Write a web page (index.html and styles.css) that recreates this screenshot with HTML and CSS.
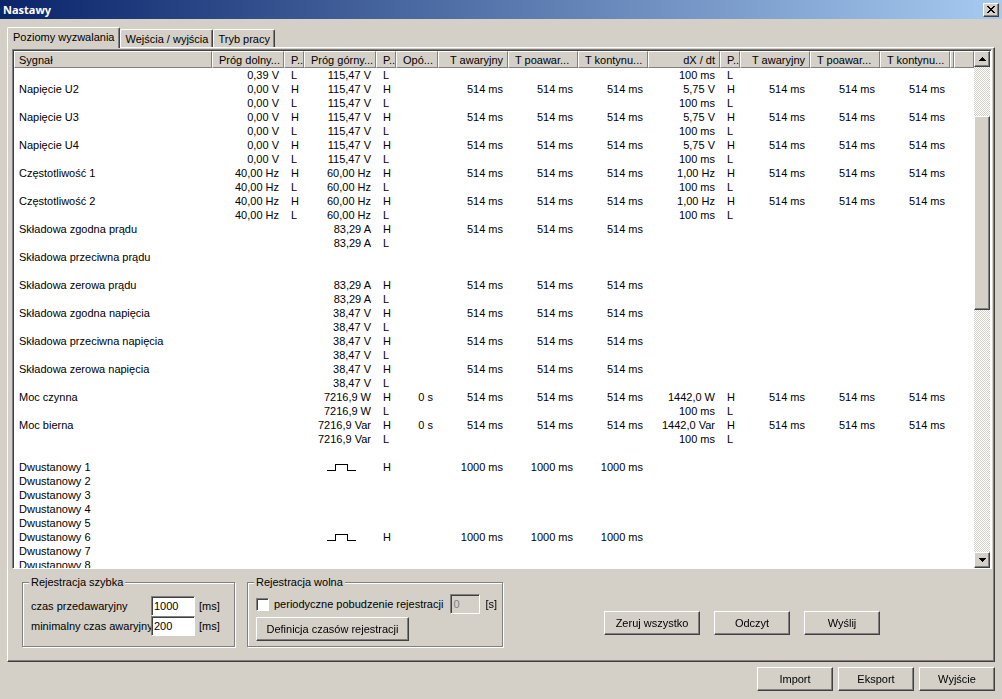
FILE: index.html
```html
<!DOCTYPE html>
<html lang="pl">
<head>
<meta charset="utf-8">
<title>Nastawy</title>
<link rel="stylesheet" href="styles.css">
</head>
<body>
<div class="window">
  <header class="titlebar">
    <h1 class="title">Nastawy</h1>
    <button class="btn close" type="button" aria-label="Zamknij">
      <svg width="8" height="7" viewBox="0 0 8 7" shape-rendering="crispEdges"><path d="M0 0h2v1h1v1h2V1h1V0h2v1H7v1H6v1H5v1h1v1h1v1h1v1H6V6H5V5H3v1H2v1H0V6h1V5h1V4h1V3H2V2H1V1H0z"/></svg>
    </button>
  </header>

  <main class="body">
    <div class="tabs" role="tablist">
      <button class="tab active" type="button" role="tab" aria-selected="true">Poziomy wyzwalania</button>
      <button class="tab" type="button" role="tab" aria-selected="false">Wejścia / wyjścia</button>
      <button class="tab" type="button" role="tab" aria-selected="false">Tryb pracy</button>
    </div>

    <section class="panel" role="tabpanel">
      <div class="listview">
        <div class="list">
          <table class="grid">
            <colgroup>
              <col class="w-name"><col class="w-level"><col class="w-flag"><col class="w-level"><col class="w-flag"><col class="w-delay">
              <col class="w-time"><col class="w-time"><col class="w-time"><col class="w-level"><col class="w-flag">
              <col class="w-time"><col class="w-time"><col class="w-time"><col class="w-stub"><col>
            </colgroup>
            <thead>
              <tr>
                <th class="left">Sygnał</th><th class="cut">Próg dolny...</th><th class="cut">P..</th><th class="cut">Próg górny...</th><th class="cut">P..</th><th class="cut">Opó...</th>
                <th>T awaryjny</th><th class="cut">T poawar...</th><th class="cut">T kontynu...</th><th>dX / dt</th><th class="cut">P..</th>
                <th>T awaryjny</th><th class="cut">T poawar...</th><th class="cut">T kontynu...</th><th class="stub"></th><th></th>
              </tr>
            </thead>
            <tbody id="rows"></tbody>
          </table>
        </div>
        <div class="scrollbar">
          <button class="btn arrow" type="button" aria-label="W górę"><svg width="7" height="4" viewBox="0 0 7 4" shape-rendering="crispEdges"><path d="M3 0h1v1h1v1h1v1h1v1H0V3h1V2h1V1h1z"/></svg></button>
          <div class="track"><div class="before"></div><div class="thumb"></div><div class="after"></div></div>
          <button class="btn arrow" type="button" aria-label="W dół"><svg width="7" height="4" viewBox="0 0 7 4" shape-rendering="crispEdges"><path d="M0 0h7v1H6v1H5v1H4v1H3V3H2V2H1V1H0z"/></svg></button>
        </div>
      </div>

      <div class="controls">
        <fieldset class="group fast">
          <legend>Rejestracja szybka</legend>
          <label for="pre">czas przedawaryjny</label><input class="field" id="pre" type="text" value="1000"><span>[ms]</span>
          <label for="min">minimalny czas awaryjny</label><input class="field" id="min" type="text" value="200"><span>[ms]</span>
        </fieldset>
        <fieldset class="group slow">
          <legend>Rejestracja wolna</legend>
          <div class="line">
            <input class="check" type="checkbox" id="periodic"><label class="grow" for="periodic">periodyczne pobudzenie rejestracji</label>
            <input class="field small" type="text" value="0" aria-label="okres [s]" disabled><span>[s]</span>
          </div>
          <button class="btn push wide" type="button">Definicja czasów rejestracji</button>
        </fieldset>
        <div class="actions">
          <button class="btn push zero" type="button">Zeruj wszystko</button>
          <button class="btn push" type="button">Odczyt</button>
          <button class="btn push" type="button">Wyślij</button>
        </div>
      </div>
    </section>
  </main>

  <footer class="footer">
    <button class="btn push" type="button">Import</button>
    <button class="btn push" type="button">Eksport</button>
    <button class="btn push" type="button">Wyjście</button>
  </footer>
</div>
<script src="script.js"></script>
</body>
</html>
```
FILE: styles.css
```css
* { box-sizing: border-box; }

body {
  margin: 0;
  background: #d4d0c8;
  color: #000;
  font: 11px/14px "Liberation Sans", Arial, sans-serif;
}

button, input { font: inherit; color: inherit; margin: 0; }

.window { display: flex; flex-direction: column; height: 100vh; }

.titlebar {
  display: flex;
  align-items: center;
  justify-content: space-between;
  height: 19px;
  padding: 0 3px;
  background: linear-gradient(90deg, #0a246a, #a6caf0);
}
.title { margin: 0; color: #fff; font: bold 11px/18px "Noto Sans", sans-serif; }

.btn {
  display: flex;
  align-items: center;
  justify-content: center;
  padding: 0;
  border: 1px solid;
  border-color: #fff #404040 #404040 #fff;
  border-radius: 0;
  background: #d4d0c8;
  box-shadow: inset -1px -1px 0 #808080;
}
.close { width: 16px; height: 14px; }

.body { flex: 1; display: flex; flex-direction: column; min-height: 0; padding: 8px 7px 0; }

.tabs { display: flex; align-items: flex-end; }
.tab {
  height: 18px;
  padding: 0 4px;
  border: 1px solid;
  border-color: #fff #404040 transparent #fff;
  border-bottom: 0;
  border-radius: 2px 2px 0 0;
  background: #d4d0c8;
  box-shadow: inset -1px 0 0 #808080;
  white-space: nowrap;
}
.tab.active { z-index: 1; height: 21px; margin-bottom: -1px; padding: 0 5px 3px; }

.panel {
  flex: 1;
  display: flex;
  flex-direction: column;
  min-height: 0;
  padding: 1px 2px 0 4px;
  border: 1px solid;
  border-color: #fff #404040 #404040 #fff;
  box-shadow: inset -1px -1px 0 #808080;
}

.listview {
  flex: 1;
  display: flex;
  min-height: 0;
  border: 1px solid;
  border-color: #808080 #fff #fff #808080;
  box-shadow: inset 1px 1px 0 #404040;
  padding: 1px 1px 0;
  background: #fff;
}
.list { flex: 1; min-width: 0; overflow: hidden; }

.grid { width: 100%; table-layout: fixed; border-collapse: separate; border-spacing: 0; }
.w-name { width: 198px; }
.w-level { width: 72px; }
.w-flag { width: 20px; }
.w-delay { width: 42px; }
.w-time { width: 70px; }
.w-stub { width: 4px; }

.grid th {
  height: 17px;
  padding: 0 4px;
  border: 1px solid;
  border-color: #fff #808080 #808080 #fff;
  background: #d4d0c8;
  font-weight: normal;
  text-align: right;
  white-space: nowrap;
  overflow: hidden;
}
.grid th.left { text-align: left; }
.grid th.cut { padding: 0 0 0 6px; text-align: left; }
.grid th.stub { padding: 0; }
.grid td { height: 14px; padding: 0 5px 0 0; text-align: right; white-space: nowrap; overflow: hidden; }
.grid td.text { padding: 0 0 0 5px; text-align: left; }
.grid td.flag { padding: 0 0 0 7px; text-align: left; }
.pulse { display: inline-block; margin-right: 15px; vertical-align: top; fill: none; stroke: #000; }

.scrollbar { display: flex; flex-direction: column; width: 16px; }
.arrow { height: 16px; }
.track {
  flex: 1;
  display: flex;
  flex-direction: column;
  background: repeating-conic-gradient(#d4d0c8 0 25%, #fff 0 50%) 0 0 / 2px 2px;
}
.before { flex: 49; }
.thumb {
  flex: 192;
  border: 1px solid;
  border-color: #fff #404040 #404040 #fff;
  background: #d4d0c8;
  box-shadow: inset -1px -1px 0 #808080;
}
.after { flex: 243; }

.controls { display: flex; gap: 12px; padding: 6px 10px 14px; }
.group {
  min-width: 0;
  margin: 0;
  padding: 5px 5px 5px 8px;
  border: 1px solid #808080;
  box-shadow: 1px 1px 0 #fff, inset 1px 1px 0 #fff;
}
.group legend { padding: 0 2px; margin-left: -2px; background: #d4d0c8; }
.fast {
  display: grid;
  grid-template-columns: 116px 44px auto;
  column-gap: 4px;
  align-content: start;
  align-items: center;
  width: 213px;
  padding-top: 7px;
  white-space: nowrap;
}
.slow { width: 256px; }
.line { display: flex; align-items: center; gap: 5px; }
.grow { flex: 1; white-space: nowrap; }

.field {
  width: 44px;
  height: 20px;
  padding: 0 2px;
  border: 1px solid;
  border-color: #808080 #fff #fff #808080;
  border-radius: 0;
  outline: 0;
  background: #fff;
  box-shadow: inset 1px 1px 0 #404040;
}
.small { width: 30px; }
.field:disabled { background: #d4d0c8; color: #808080; }

.check {
  appearance: none;
  width: 13px;
  height: 13px;
  border: 1px solid;
  border-color: #808080 #fff #fff #808080;
  background: #fff;
  box-shadow: inset 1px 1px 0 #404040;
}

.push { width: 76px; height: 24px; white-space: nowrap; }
.zero { width: 96px; }
.wide { width: 153px; margin-top: 3px; }

.actions { flex: 1; display: flex; justify-content: flex-end; align-items: flex-end; gap: 14px; padding: 0 102px 12px 0; }
.footer { display: flex; justify-content: flex-end; gap: 5px; padding: 5px 7px 8px; }
```
FILE: script.js
```javascript
const PULSE = '<svg class="pulse" width="29" height="14" viewBox="0 0 29 14" shape-rendering="crispEdges"><path d="M0 10.5h8.5v-6h12v6H29"/></svg>';
const T = ["514 ms", "514 ms", "514 ms"];
const T1000 = ["1000 ms", "1000 ms", "1000 ms"];
const NONE = ["", "", ""];

// name, low, flag, high, flag, delay, three times, dX/dt, flag, three times
const blank = (name = "") => [name, "", "", "", "", "", ...NONE, "", "", ...NONE];
const lower = (low, high, rate) =>
  ["", low, low && "L", high, "L", "", ...NONE, rate ? "100 ms" : "", rate ? "L" : "", ...NONE];
const signal = (name, low, high, rate = "", delay = "") => [
  [name, low, low && "H", high, "H", delay, ...T, rate, rate && "H", ...(rate ? T : NONE)],
  lower(low, high, rate)
];
const binary = (n, on) =>
  ["Dwustanowy " + n, "", "", on ? PULSE : "", on ? "H" : "", "", ...(on ? T1000 : NONE), "", "", ...NONE];

const rows = [
  lower("0,39 V", "115,47 V", true),
  ...signal("Napięcie U2", "0,00 V", "115,47 V", "5,75 V"),
  ...signal("Napięcie U3", "0,00 V", "115,47 V", "5,75 V"),
  ...signal("Napięcie U4", "0,00 V", "115,47 V", "5,75 V"),
  ...signal("Częstotliwość 1", "40,00 Hz", "60,00 Hz", "1,00 Hz"),
  ...signal("Częstotliwość 2", "40,00 Hz", "60,00 Hz", "1,00 Hz"),
  ...signal("Składowa zgodna prądu", "", "83,29 A"),
  blank("Składowa przeciwna prądu"),
  blank(),
  ...signal("Składowa zerowa prądu", "", "83,29 A"),
  ...signal("Składowa zgodna napięcia", "", "38,47 V"),
  ...signal("Składowa przeciwna napięcia", "", "38,47 V"),
  ...signal("Składowa zerowa napięcia", "", "38,47 V"),
  ...signal("Moc czynna", "", "7216,9 W", "1442,0 W", "0 s"),
  ...signal("Moc bierna", "", "7216,9 Var", "1442,0 Var", "0 s"),
  blank(),
  ...[1, 2, 3, 4, 5, 6, 7, 8].map(n => binary(n, n === 1 || n === 6))
];

const cellClass = i => (i === 0 ? "text" : [2, 4, 10].includes(i) ? "flag" : "");
document.getElementById("rows").innerHTML = rows
  .map(r => "<tr>" + r.map((c, i) => `<td class="${cellClass(i)}">${c}</td>`).join("") + "<td></td><td></td></tr>")
  .join("");

const field = document.getElementById("min");
field.focus();
field.setSelectionRange(3, 3);
```
